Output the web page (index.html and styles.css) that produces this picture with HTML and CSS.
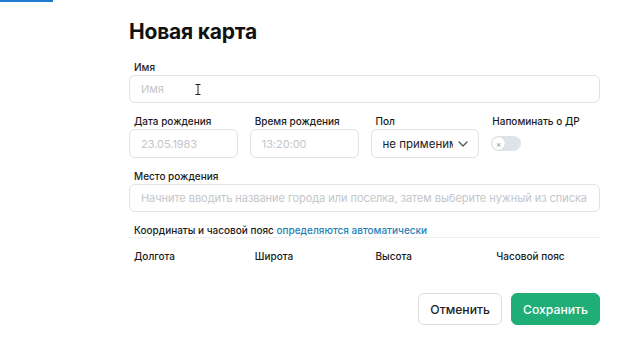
FILE: index.html
```html
<!DOCTYPE html>
<html lang="ru">
<head>
    <meta charset="UTF-8">
    <meta name="viewport" content="width=device-width, initial-scale=1.0">
    <title>Новая карта</title>
    <link rel="stylesheet" href="styles.css">
</head>
<body>
    <div class="progress"></div>

    <div class="form">
        <h1 class="titulo">Новая карта</h1>

        <div class="campo">
            <label class="rotulo">Имя</label>
            <div class="entrada">
                <span class="placeholder">Имя</span>
                <svg class="cursor" width="6" height="11" viewBox="0 0 6 11">
                    <path d="M0.5 0.5h5M3 0.5v10M0.5 10.5h5" stroke="#222" stroke-width="1" fill="none"/>
                </svg>
            </div>
        </div>

        <div class="linha">
            <div class="campo">
                <label class="rotulo">Дата рождения</label>
                <div class="entrada"><span class="placeholder">23.05.1983</span></div>
            </div>
            <div class="campo">
                <label class="rotulo">Время рождения</label>
                <div class="entrada"><span class="placeholder">13:20:00</span></div>
            </div>
            <div class="campo">
                <label class="rotulo">Пол</label>
                <div class="entrada selecao">
                    <span class="valor">не применим</span>
                    <svg class="seta" width="10" height="6" viewBox="0 0 10 6">
                        <path d="M1 1l4 4 4-4" stroke="#555" stroke-width="1.3" fill="none" stroke-linecap="round" stroke-linejoin="round"/>
                    </svg>
                </div>
            </div>
            <div class="campo">
                <label class="rotulo rente">Напоминать о ДР</label>
                <div class="toggle">
                    <span class="bolinha">&times;</span>
                </div>
            </div>
        </div>

        <div class="campo">
            <label class="rotulo">Место рождения</label>
            <div class="entrada"><span class="placeholder">Начните вводить название города или поселка, затем выберите нужный из списка</span></div>
        </div>

        <div class="coordenadas">
            Координаты и часовой пояс <a class="link" href="#">определяются автоматически</a>
        </div>

        <div class="linha colunas">
            <span class="rotulo">Долгота</span>
            <span class="rotulo">Широта</span>
            <span class="rotulo">Высота</span>
            <span class="rotulo">Часовой пояс</span>
        </div>

        <div class="botoes">
            <button class="botao cancelar">Отменить</button>
            <button class="botao salvar">Сохранить</button>
        </div>
    </div>
</body>
</html>
```

FILE: styles.css
```css
body {
    font-family: Inter, "Noto Sans", sans-serif;
    margin: 0;
    background-color: #ffffff;
    color: #1b1b1b;
}

.progress {
    width: 53px;
    height: 2px;
    background-color: #1f7bcf;
}

.form {
    width: 471px;
    margin-left: 129px;
    padding-top: 17px;
}

.titulo {
    font-size: 21px;
    line-height: 25px;
    font-weight: 700;
    margin: 0 0 17px 0;
    letter-spacing: -0.2px;
    color: #111;
}

.campo {
    display: flex;
    flex-direction: column;
    margin-bottom: 12px;
}

.rotulo {
    font-size: 10px;
    line-height: 12px;
    font-weight: 500;
    padding-left: 5px;
    margin-bottom: 2px;
    color: #1b1b1b;
    white-space: nowrap;
}

.rente {
    padding-left: 1px;
}

.entrada {
    height: 26px;
    border: 1px solid #e2e2e2;
    border-radius: 6px;
    display: flex;
    align-items: center;
    padding-left: 11px;
}

.linha .entrada {
    height: 27px;
}

.placeholder {
    font-size: 11px;
    color: #c4c6c9;
    white-space: nowrap;
    overflow: hidden;
    letter-spacing: -0.05px;
}

.cursor {
    margin-left: 31px;
}

.linha {
    display: grid;
    grid-template-columns: repeat(4, 1fr);
    gap: 12px;
}

.selecao {
    padding-right: 10px;
}

.valor {
    font-size: 11.5px;
    color: #222;
    white-space: nowrap;
    overflow: hidden;
    width: 70px;
}

.seta {
    flex-shrink: 0;
    margin-left: auto;
}

.toggle {
    width: 30px;
    height: 15px;
    margin-top: 7px;
    border-radius: 8px;
    background-color: #dfe4ea;
    display: flex;
    align-items: center;
    padding-left: 1px;
    box-sizing: border-box;
}

.bolinha {
    width: 13px;
    height: 13px;
    border-radius: 50%;
    background-color: #fff;
    font-size: 8px;
    color: #888;
    display: flex;
    align-items: center;
    justify-content: center;
    box-shadow: 0 0 1px rgba(0, 0, 0, 0.2);
}

.coordenadas {
    font-size: 10px;
    line-height: 12px;
    font-weight: 500;
    padding: 0 0 1px 5px;
    border-bottom: 1px solid #f0f0f0;
}

.link {
    color: #2580b4;
    text-decoration: none;
}

.colunas {
    margin-top: 12px;
}

.botoes {
    display: flex;
    justify-content: flex-end;
    gap: 9px;
    margin-top: 29px;
}

.botao {
    font-family: Inter, "Noto Sans", sans-serif;
    font-size: 12.2px;
    font-weight: 500;
    height: 32px;
    border-radius: 6px;
    padding: 0 11px;
    cursor: pointer;
}

.cancelar {
    background-color: #fff;
    border: 1px solid #dcdcdc;
    color: #222;
}

.salvar {
    background-color: #1fae76;
    border: 1px solid #1fae76;
    color: #fff;
}
```
